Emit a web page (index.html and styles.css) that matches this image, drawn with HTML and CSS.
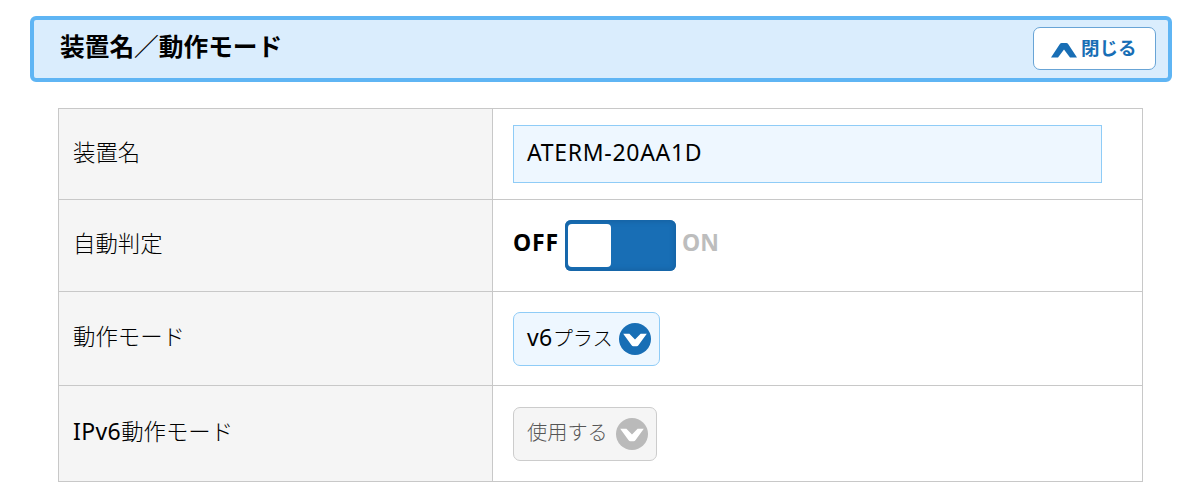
FILE: index.html
```html
<!DOCTYPE html>
<html lang="ja">
<head>
<meta charset="utf-8">
<title>装置名／動作モード</title>
<link rel="stylesheet" href="styles.css">
</head>
<body>
<main class="page">
  <header class="panel-header">
    <h1 class="panel-title">装置名／動作モード</h1>
    <button class="close-button" type="button">
      <svg class="close-icon" width="26" height="15" viewBox="0 0 26 15"><path d="M0 14.5 8.7 1.2Q9.5 0 10.8 0h4.4q1.3 0 2.1 1.2L26 14.5h-7L13 6.6 7 14.5z"/></svg>
      <span class="close-label">閉じる</span>
    </button>
  </header>
  <section class="settings">
    <div class="label label-name"><span>装置名</span></div>
    <div class="value"><div class="text-field"><span class="field-text">ATERM-20AA1D</span></div></div>
    <div class="label label-auto"><span>自動判定</span></div>
    <div class="value value-switch">
      <span class="state state-off">OFF</span>
      <span class="switch"><span class="knob"></span></span>
      <span class="state state-on">ON</span>
    </div>
    <div class="label label-mode"><span>動作モード</span></div>
    <div class="value value-mode">
      <div class="select">
        <span class="select-text"><span class="latin">v6</span><span class="kana">プラス</span></span>
        <svg class="select-icon" width="32" height="32" viewBox="0 0 32 32"><circle cx="16" cy="16" r="16"/><path d="M4.2 10.7h6.2L16 16.6l5.6-5.9h6.2L19.6 22q-.8 1.2-2 1.2h-3.2q-1.2 0-2-1.2z"/></svg>
      </div>
    </div>
    <div class="label label-ipv6"><span class="latin">IPv6</span><span>動作モード</span></div>
    <div class="value value-ipv6">
      <div class="select select-disabled">
        <span class="select-text use-text">使用する</span>
        <svg class="select-icon" width="32" height="32" viewBox="0 0 32 32"><circle cx="16" cy="16" r="16"/><path d="M4.2 10.7h6.2L16 16.6l5.6-5.9h6.2L19.6 22q-.8 1.2-2 1.2h-3.2q-1.2 0-2-1.2z"/></svg>
      </div>
    </div>
  </section>
</main>
</body>
</html>
```
FILE: styles.css
```css
* { box-sizing: border-box; }
body {
  margin: 0;
  background: #fff;
  color: #000;
  font-family: "Noto Sans", "Noto Sans CJK JP", sans-serif;
  font-size: 22.4px;
  line-height: 32px;
}
.page { padding: 16px 28px 0 30px; height: 503px; overflow: hidden; }
.panel-header {
  display: flex;
  justify-content: space-between;
  align-items: flex-start;
  height: 66px;
  padding: 7px 12px 0 26px;
  border: 4px solid #5fb5f4;
  border-radius: 6px;
  background: #daedfd;
}
.panel-title {
  margin: 2px 0 0;
  color: #000;
  font-family: "Noto Sans CJK JP", sans-serif;
  font-size: 24.7px;
  font-weight: 700;
  line-height: 32px;
}
.close-button {
  display: flex;
  align-items: center;
  gap: 4px;
  width: 123px;
  height: 43px;
  padding: 0 0 0 17px;
  border: 1.5px solid #68a4d6;
  border-radius: 7px;
  background: #fff;
  color: #186eb5;
  font-family: "Noto Sans CJK JP", sans-serif;
  font-size: 18.5px;
  font-weight: 700;
  line-height: 28px;
}
.close-icon { flex: none; margin-top: 4px; fill: currentColor; }
.close-label { margin-top: -3px; white-space: nowrap; }
.settings {
  display: grid;
  grid-template-columns: 433px 649px;
  grid-template-rows: 90px 91px 93px 95px;
  gap: 1px;
  width: max-content;
  margin: 26px 0 0 28px;
  border: 1px solid #c8c8c8;
  background: #c8c8c8;
}
.label { padding-left: 14px; background: #f5f5f5; font-weight: 300; white-space: nowrap; }
.label-name { padding-top: 28px; }
.label-auto { padding-top: 28px; }
.label-mode { padding-top: 29px; }
.label-ipv6 { padding-top: 29px; }
.latin { font-size: 23px; font-weight: 400; letter-spacing: 0.4px; }
.value { padding: 16px 0 0 20px; background: #fff; }
.text-field {
  width: 589px;
  height: 58px;
  padding: 10px 13px;
  border: 1px solid #8fccf7;
  background: #eef7ff;
}
.field-text { font-size: 23px; letter-spacing: 0.7px; }
.value-switch { display: flex; padding-top: 20px; }
.state { margin-top: 6px; font-size: 23px; font-weight: 700; line-height: 32px; }
.state-off { width: 52px; letter-spacing: 0.8px; }
.state-on { margin-left: 6px; color: #bdbdbd; }
.switch {
  width: 111px;
  height: 51px;
  padding: 4px 3px;
  border-radius: 6px;
  background: #186eb5;
  box-shadow: inset 0 0 4px 2px #1764a5;
}
.knob { display: block; width: 43px; height: 43px; border-radius: 4px; background: #fff; }
.value-mode { padding-top: 20px; }
.value-ipv6 { padding-top: 21px; }
.select {
  display: flex;
  justify-content: space-between;
  width: 147px;
  height: 54px;
  padding: 10px 8px 0 13px;
  border: 1px solid #8fccf7;
  border-radius: 7px;
  background: #eef7ff;
}
.select-text { margin-top: -2px; font-weight: 300; white-space: nowrap; }
.kana { font-size: 20.2px; }
.select-icon { flex: none; fill: #186eb5; }
.select-icon path { fill: #fff; }
.select-disabled { width: 144px; height: 54px; border-color: #ccc; background: #f5f5f5; color: #555; }
.select-disabled .select-icon { fill: #bababa; }
.use-text { font-size: 20.2px; }
```
